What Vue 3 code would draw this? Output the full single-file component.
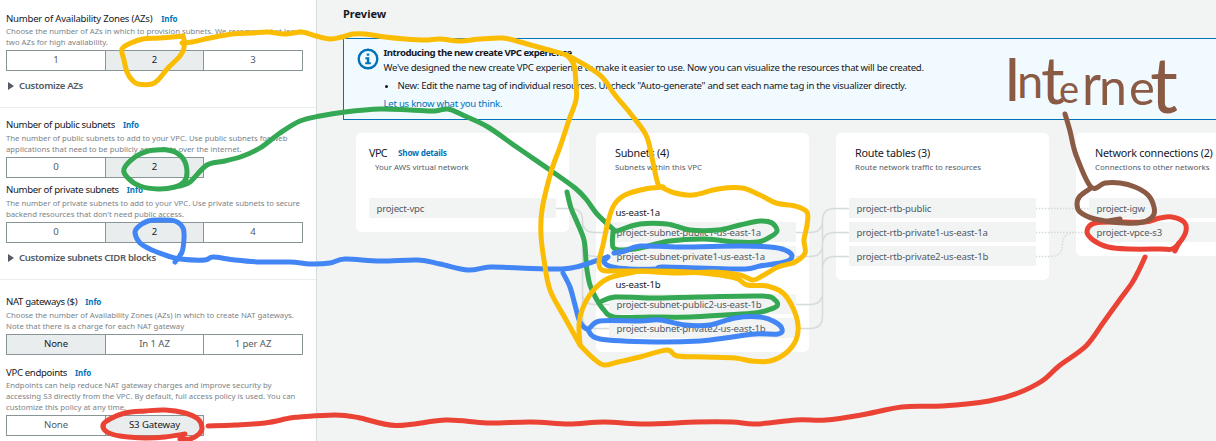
<script setup>
const sections = [
  {
    fields: [
      {
        label: 'Number of Availability Zones (AZs)',
        tight: true,
        lines: ['Choose the number of AZs in which to provision subnets. We recommend at least', 'two AZs for high availability.'],
        options: ['1', '2', '3'],
        selected: 1,
      },
    ],
    expander: 'Customize AZs',
  },
  {
    fields: [
      {
        label: 'Number of public subnets',
        lines: ['The number of public subnets to add to your VPC. Use public subnets for web', 'applications that need to be publicly accessible over the internet.'],
        options: ['0', '2'],
        selected: 1,
      },
      {
        label: 'Number of private subnets',
        lines: ['The number of private subnets to add to your VPC. Use private subnets to secure', "backend resources that don't need public access."],
        options: ['0', '2', '4'],
        selected: 1,
      },
    ],
    expander: 'Customize subnets CIDR blocks',
  },
  {
    fields: [
      {
        label: 'NAT gateways ($)',
        lines: ['Choose the number of Availability Zones (AZs) in which to create NAT gateways.', 'Note that there is a charge for each NAT gateway'],
        options: ['None', 'In 1 AZ', '1 per AZ'],
        selected: 0,
      },
      {
        label: 'VPC endpoints',
        tight: true,
        lines: ['Endpoints can help reduce NAT gateway charges and improve security by', 'accessing S3 directly from the VPC. By default, full access policy is used. You can', 'customize this policy at any time.'],
        options: ['None', 'S3 Gateway'],
        selected: 1,
      },
    ],
  },
]

const cards = [
  { title: 'VPC', link: 'Show details', sub: 'Your AWS virtual network', first: true, rows: [{ text: 'project-vpc' }] },
  {
    title: 'Subnets (4)',
    sub: 'Subnets within this VPC',
    rows: [
      { text: 'us-east-1a', group: true },
      { text: 'project-subnet-public1-us-east-1a' },
      { text: 'project-subnet-private1-us-east-1a' },
      { text: 'us-east-1b', group: true },
      { text: 'project-subnet-public2-us-east-1b' },
      { text: 'project-subnet-private2-us-east-1b' },
    ],
  },
  {
    title: 'Route tables (3)',
    sub: 'Route network traffic to resources',
    rows: [{ text: 'project-rtb-public' }, { text: 'project-rtb-private1-us-east-1a' }, { text: 'project-rtb-private2-us-east-1b' }],
  },
  { title: 'Network connections (2)', sub: 'Connections to other networks', rows: [{ text: 'project-igw' }, { text: 'project-vpce-s3' }] },
]

// Turns a list of pen positions into a smooth curve through all of them.
function smooth(list) {
  const n = list.trim().split(/\s+/).map((s) => s.split(',').map(Number))
  let d = `M${n[0][0]} ${n[0][1]}`
  for (let i = 0; i < n.length - 1; i++) {
    const a = n[i - 1] || n[i]
    const b = n[i]
    const c = n[i + 1]
    const e = n[i + 2] || c
    d += `C${b[0] + (c[0] - a[0]) / 6} ${b[1] + (c[1] - a[1]) / 6} ${c[0] - (e[0] - b[0]) / 6} ${c[1] - (e[1] - b[1]) / 6} ${c[0]} ${c[1]}`
  }
  return d
}

const strokes = [
  ['green', '163,149.5 148,151 135,157 124,169 128,178 140,186 158,189 175,187 184,182 187,173 184,160 175,152 163,149.5'],
  ['green', '180,186 190,182 207,165 225,161 243,156 260,148 280,133 300,121 320,116 345,112 380,109 410,110 435,111 448,109 465,116 488,127 518,148 550,170 575,188 586,199 597,214 615,231'],
  ['green', '617,231 640,224 667,224 690,230 718,230 740,225 760,221 772,223 777,231 770,237 758,242 735,242 705,239 670,241 640,248 622,250 613,247 613,232'],
  ['green', '567,192 571,208 577,222 584,240 586,260 587,270 590,285 597,300 604,310 614,317 650,317 690,317 725,315 755,313 768,310 777,306 775,300 762,296 700,297 650,298 615,297 600,302'],
  ['blue', '175,262 182,252 184,238 183,228 175,221 160,220 148,221 138,227 135,233 140,243 152,250 168,256 180,259 205,260 213,257 235,260 260,262 290,262 310,264 330,263 345,259 380,261 418,260 440,264 468,270 490,267 520,268 562,269 580,266 607,257'],
  ['blue', '614,253 625,251 640,246 680,247 740,246 770,247 785,250 792,256 785,262 760,266 745,269 700,268 662,267 655,269 630,269 612,267 604,262 608,257'],
  ['blue', '563,273 570,287 575,305 580,322 588,329 600,321 640,321 660,320 685,325 710,325 735,318 760,317 775,322 782,329 778,334 755,334 725,338 700,341 655,342 600,339 588,330'],
  ['yellow', '183,36 160,38 143,39 131,43 122,49 124,60 127,72 132,80 138,84 152,84 159,79 168,68 180,56 184,48 184,40 183,36'],
  ['yellow', '182,43 192,42 210,38 232,34 252,33 268,32 285,34 302,32 316,36 330,39 342,37 353,34 365,34 385,37 405,39 425,40 440,39 460,41 480,39 503,38 520,42 545,49 566,55 585,65 602,77 615,95 630,113 646,135 652,158 658,184 663,187'],
  ['yellow', '567,55 574,65 576,85 576,100 569,120 560,147 551,172 542,210 541,235 544,260 550,290 565,318 580,345'],
  ['yellow', '663,187 645,189 625,195 614,205 608,222 603,245 599,262 602,270 615,271 640,271 672,273 715,272 740,275 753,280 762,276 778,267 795,262 805,253 804,240 807,225 807,212 795,206 776,203 760,195 742,188 718,189 693,195 675,193 661,187'],
  ['yellow', '580,345 579,325 582,310 592,292 607,279 630,273 645,271 690,272 720,275 738,279 747,285 767,286 783,293 793,308 798,325 796,340 786,353 770,361 752,361 735,358 705,357 677,356 667,350 640,357 618,362 604,365 593,358 580,345'],
  ['red', '185,434 165,437 145,438 120,436 107,432 103,425 110,419 125,413 145,411 165,410 185,413 198,419 202,428 199,434 190,439 180,439'],
  ['red', '208,426 235,425 265,423 290,418 300,417 335,415 358,417.5 396,425.5 446,420 487,423 531,422 569,424 604,422 645,424 697,422 732,422 756,424 796,420 826,420 861,415 902,407 942,406 989,401 1018,393 1042,381 1059,366 1086,346 1103,323 1121,298 1132,283 1139,270 1145,257'],
  ['red', '1120,222 1095,223 1087,231 1093,240 1108,247 1130,249 1160,249 1172,249 1180,242 1186,231 1184,222 1172,217 1160,218 1145,222 1120,222'],
  ['red', '1179,243 1175,251'],
  ['brown', '1065,114 1070,131 1076,155 1091,187 1105,183 1120,183 1135,187 1148,195 1154,207 1153,216 1143,222 1125,223 1095,219 1080,212 1077,204 1080,196 1091,188'],
  ['brown', '1108,221 1120,219'],
].map(([ink, pts]) => ({ ink, d: smooth(pts) }))
</script>

<template>
  <div class="page">
    <aside class="settings">
      <section v-for="(s, i) in sections" :key="i" class="section" :class="'section-' + i">
        <div v-for="f in s.fields" :key="f.label" class="field" :class="{ tight: f.tight }">
          <div class="label"><span class="name">{{ f.label }}</span><a class="info">Info</a></div>
          <div class="desc"><div v-for="l in f.lines" :key="l">{{ l }}</div></div>
          <div class="segments">
            <div v-for="(o, k) in f.options" :key="o" class="segment" :class="{ on: k === f.selected }">{{ o }}</div>
          </div>
        </div>
        <div v-if="s.expander" class="expander">
          <svg width="6" height="8" viewBox="0 0 6 8"><path d="M0 0L6 4L0 8Z" fill="#545b64" /></svg>
          <span>{{ s.expander }}</span>
        </div>
      </section>
    </aside>

    <main class="preview">
      <h2>Preview</h2>
      <div class="alert">
        <svg class="alert-icon" width="22" height="22" viewBox="0 0 22 22">
          <circle cx="11" cy="11" r="9.3" fill="none" stroke="#0073bb" stroke-width="2.4" />
          <path d="M9.7 5.4h2.6v2.3H9.7zM8.4 9.2h3.9v5h1.5v2H8.2v-2h1.6v-3H8.4z" fill="#0073bb" />
        </svg>
        <div class="alert-text">
          <div class="alert-title">Introducing the new create VPC experience</div>
          <div class="alert-line">We've designed the new create VPC experience to make it easier to use. Now you can visualize the resources that will be created.</div>
          <div class="alert-item"><i></i>New: Edit the name tag of individual resources. Uncheck "Auto-generate" and set each name tag in the visualizer directly.</div>
          <a>Let us know what you think.</a>
        </div>
      </div>
      <div class="cards">
        <article v-for="c in cards" :key="c.title" class="card" :class="{ first: c.first }">
          <div class="card-title"><span>{{ c.title }}</span><a v-if="c.link">{{ c.link }}</a></div>
          <div class="card-sub">{{ c.sub }}</div>
          <div class="rows">
            <div v-for="r in c.rows" :key="r.text" :class="r.group ? 'group' : 'row'">{{ r.text }}</div>
          </div>
        </article>
      </div>
    </main>

    <svg class="overlay" width="1216" height="441" viewBox="0 0 1216 441" fill="none">
      <g stroke="#d5dbdb" stroke-width="1.5">
        <path d="M556 208.5H570Q582.5 208.5 582.5 220.5Q582.5 232.5 595 232.5H609M582.5 220V316Q582.5 328.5 595 328.5H609M582.5 244Q582.5 256.5 595 256.5H609M582.5 292Q582.5 304.5 595 304.5H609" />
        <path d="M796 232.5H810Q822.5 232.5 822.5 220.5Q822.5 208.5 835 208.5H849M796 256.5H810Q822.5 256.5 822.5 244.5Q822.5 232.5 835 232.5H849M822.5 220V316Q822.5 328.5 810 328.5H796M810 304.5H796M810 304.5Q822.5 304.5 822.5 292M822.5 269Q822.5 256.5 835 256.5H849" />
        <path stroke-dasharray="1.5 1.5" d="M1036 208.5H1089M1036 232.5H1089M1036 256.5H1050Q1062.5 256.5 1062.5 244.5Q1062.5 232.5 1075 232.5" />
      </g>
      <path v-for="(s, i) in strokes" :key="i" :d="s.d" class="pen" :class="s.ink" />
      <text class="note">
        <tspan x="1004" y="101" font-size="60">I</tspan><tspan x="1017" y="98" font-size="47">n</tspan><tspan x="1041" y="104" font-size="66">t</tspan><tspan x="1059" y="103" font-size="38">e</tspan><tspan x="1082" y="105" font-size="58" textLength="19" lengthAdjust="spacingAndGlyphs">r</tspan><tspan x="1099" y="105" font-size="50">n</tspan><tspan x="1129" y="105" font-size="49">e</tspan><tspan x="1150" y="113" font-size="78">t</tspan>
      </text>
    </svg>
  </div>
</template>

<style>
body { margin: 0; overflow: hidden; }
</style>

<style scoped>
.page { position: relative; display: flex; width: 1216px; height: 441px; overflow: hidden; background: #f2f3f3; color: #16191f; font-family: "Noto Sans", "Open Sans", sans-serif; white-space: nowrap; }
a { color: #0073bb; }
.settings { box-sizing: border-box; flex: none; width: 317px; background: #fff; border-right: 1px solid #d5dbdb; }
.section { box-sizing: border-box; border-bottom: 1px solid #eaeded; }
.section-0 { height: 108px; padding-top: 12px; }
.section-1 { height: 172px; padding-top: 10px; }
.section-2 { height: 161px; padding-top: 15px; border-bottom: 0; }
.field { padding-left: 6px; }
.section-1 .field + .field { margin-top: 5px; }
.section-2 .field + .field { margin-top: 11px; }
.label { display: flex; align-items: center; gap: 8px; height: 12px; }
.name { font-size: 9.6px; letter-spacing: -0.34px; }
.section-0 .name { letter-spacing: -0.23px; }
.info { font-size: 8px; font-weight: 700; letter-spacing: -0.1px; }
.section-0 .info { margin-left: 1px; }
.desc { margin: 2.5px 0 2.5px; font-size: 7.75px; line-height: 11px; color: #7b838a; }
.tight .desc { margin-top: 1.5px; }
.segments { display: flex; height: 21px; }
.segment { box-sizing: border-box; width: 100px; border: 1px solid #879596; text-align: center; font-size: 9.6px; line-height: 18px; letter-spacing: -0.1px; color: #545b64; }
.segment + .segment { border-left: 0; width: 98px; }
.segment + .segment + .segment { width: 99px; }
.segment.on { background: #eaeded; color: #16191f; }
.expander { display: flex; align-items: center; gap: 5px; height: 14px; margin: 8px 0 0 8px; font-size: 9.6px; font-weight: 600; letter-spacing: -0.33px; color: #545b64; }
.expander span { position: relative; top: -1px; }
.preview { flex: 1; min-width: 0; }
h2 { margin: 6px 0 0 26px; height: 16px; font-size: 11px; line-height: 16px; font-weight: 700; }
.alert { box-sizing: border-box; display: flex; width: 900px; height: 82px; margin: 16px 0 0 26px; border: 1px solid #0073bb; background: #f1faff; }
.alert-icon { margin: 8.5px 0 0 12.5px; flex: none; }
.alert-text { padding: 7px 0 0 5px; font-size: 9.6px; line-height: 14px; letter-spacing: -0.29px; }
.alert-title { font-weight: 700; letter-spacing: -0.45px; }
.alert-line { margin-top: 1px; }
.alert-item { display: flex; align-items: center; margin-top: 4px; letter-spacing: -0.28px; }
.alert-item i { width: 3px; height: 3px; margin: 0 10px 0 1px; border-radius: 50%; background: #16191f; }
.alert-text a { display: block; margin-top: 3.5px; letter-spacing: -0.25px; }
.cards { display: flex; align-items: flex-start; gap: 27px; width: 960px; margin: 13px 0 0 39px; }
.card { box-sizing: border-box; flex: none; width: 213px; padding: 11.5px 13px 14px; background: #fff; border-radius: 5px; }
.card-title { display: flex; align-items: center; gap: 11px; height: 15px; padding-left: 6px; font-size: 10.8px; letter-spacing: -0.24px; }
.first .card-title { padding-left: 0; letter-spacing: -0.6px; }
.card-title a { font-size: 8.2px; font-weight: 700; letter-spacing: -0.25px; }
.card-sub { height: 12px; margin-top: 1.5px; padding-left: 6px; font-size: 7.9px; line-height: 12px; color: #545b64; }
.rows { display: grid; gap: 4px; margin-top: 25px; }
.row, .group { height: 20px; font-size: 9.6px; letter-spacing: -0.2px; }
.row { padding-left: 7.5px; line-height: 22px; background: #f2f3f3; color: #545b64; }
.group { padding-left: 6.5px; line-height: 29px; }
.overlay { position: absolute; left: 0; top: 0; }
.pen { stroke-width: 5; stroke-linecap: round; stroke-linejoin: round; }
.green { stroke: #34a853; }
.blue { stroke: #4285f4; }
.yellow { stroke: #fbbc04; }
.red { stroke: #ea4335; }
.brown { stroke: #8a5a44; }
.note { font-family: Lato, sans-serif; fill: #8a5a44; }
</style>
